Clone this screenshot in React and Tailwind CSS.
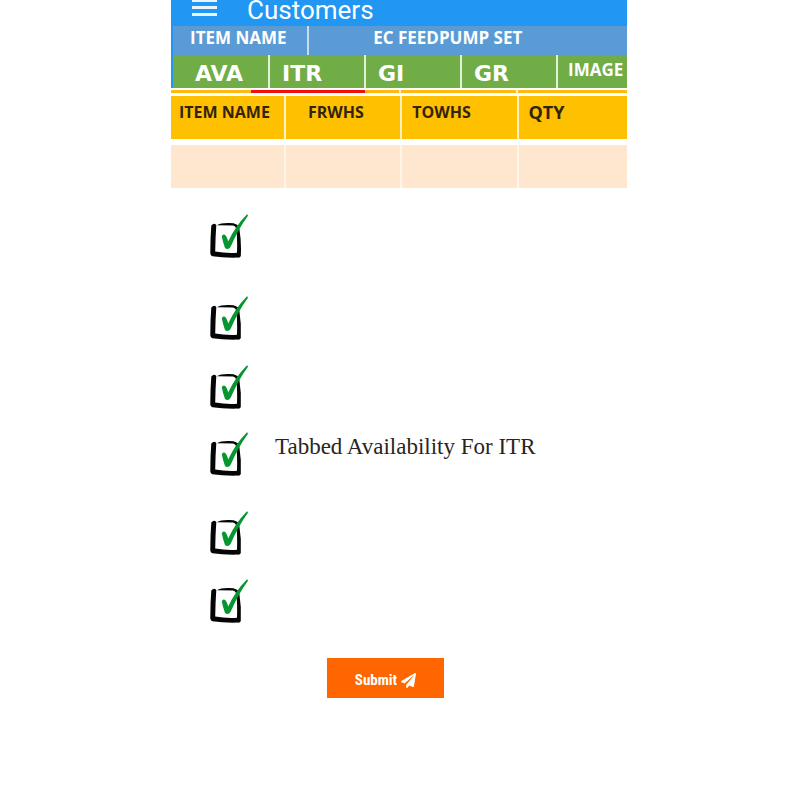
import { useState } from "react";

const tabs = [
  { name: "AVA", style: "pl-[22px] pt-1 text-[22px] font-['DejaVu_Sans',sans-serif]" },
  { name: "ITR", style: "pl-3 pt-1 text-[22px] font-['DejaVu_Sans',sans-serif]" },
  { name: "GI", style: "pl-3 pt-1 text-[22px] font-['DejaVu_Sans',sans-serif]" },
  { name: "GR", style: "pl-3 pt-1 text-[22px] font-['DejaVu_Sans',sans-serif]" },
  { name: "IMAGE", style: "pl-2.5 pb-1 text-[17px] font-['Open_Sans',sans-serif]" },
];

const columns = [
  { name: "ITEM NAME", style: "w-[25%] pl-2 text-base" },
  { name: "FRWHS", style: "w-[25.5%] pl-[22px] text-base" },
  { name: "TOWHS", style: "w-[25.5%] pl-2.5 text-base" },
  { name: "QTY", style: "w-[24%] pl-2.5 text-lg" },
];

const options = [
  { id: "first", text: "", gap: "mt-[26px]" },
  { id: "second", text: "", gap: "mt-[38px]" },
  { id: "third", text: "", gap: "mt-[25px]" },
  { id: "itr", text: "Tabbed Availability For ITR", gap: "mt-[23px]" },
  { id: "fifth", text: "", gap: "mt-[35px]" },
  { id: "sixth", text: "", gap: "mt-6" },
];

function Option({ id, text, gap }) {
  return (
    <li className={gap}>
      <label htmlFor={id} className="relative flex h-11 items-start gap-[26px]">
        <input id={id} type="checkbox" defaultChecked aria-label={text || "Option " + id} className="peer absolute size-8 appearance-none" />
        <svg viewBox="0 0 39 44" className="h-11 w-[39px] shrink-0 peer-checked:[&_.tick]:visible" aria-hidden="true">
          <path d="M1.3 11.5Q4 8.500 6.300 11Q5.400 24 5.200 37.600Q16 39.500 27 38.800Q27.500 24 26.300 14.500Q25.500 12 23 11.500L7 11.300Q10 9 18 9Q28.800 8.600 29.300 14.500Q31.600 28 30.800 42Q30.300 44 27 43.600Q13 43.900 2.500 42.200Q0 41.500 .300 38Q.300 24 1.300 11.500Z" fill="#050505" />
          <path className="tick invisible" d="M11.800 22.500Q12.500 20 14.800 20.800Q16.500 21.500 18.200 27.500Q25 12.500 36.800 .500Q38.300 0 37.800 2Q28 15.500 20.800 32.500Q18.300 36.800 15 34Q13 28.500 11.800 22.500Z" fill="#05962f" />
        </svg>
        <span className="font-['Liberation_Serif',serif] text-[23px] leading-[30px] text-[#29251e]">{text}</span>
      </label>
    </li>
  );
}

export default function App() {
  const [active, setActive] = useState("ITR");
  return (
    <div className="min-h-screen bg-white pr-0.5">
      <main className="mx-auto w-full max-w-[456px]">
        <header className="flex h-[26px] items-start gap-[30px] bg-[#2196f3] pl-[21px] text-white">
          <button type="button" aria-label="Menu" className="h-4">
            <svg viewBox="0 0 25 16" className="h-4 w-[25px]" fill="#e9f5fe" aria-hidden="true">
              <path d="M0 0h25v2H0zM0 6h25v3H0zM0 13h25v3H0z" />
            </svg>
          </button>
          <h1 className="font-['Roboto',sans-serif] text-[26px] leading-5">Customers</h1>
        </header>

        <div className="border-l-2 border-[#2196f3]">
          <dl className="flex h-[29px] bg-[#5b9bd5] font-['Open_Sans',sans-serif] text-[17px] font-bold leading-6 text-white">
            <dt className="w-[30%] border-r-2 border-[#c5dcf1] pl-[17px]">ITEM NAME</dt>
            <dd className="pl-16">EC FEEDPUMP SET</dd>
          </dl>
          <nav className="grid h-[33px] grid-cols-[97fr_96fr_96fr_96fr_69fr] bg-[#70ad47]">
            {tabs.map(({ name, style }) => (
              <button
                key={name}
                type="button"
                aria-pressed={active === name}
                onClick={() => setActive(name)}
                className={"border-r-2 border-[#e2efd9] text-left font-bold leading-6 text-white last:border-r-0 " + style}
              >
                {name}
              </button>
            ))}
          </nav>
        </div>

        <div className="mt-0.5 mb-[3px] flex h-[3px] bg-[#ffb90f]">
          <span className="w-[17.5%]" />
          <span className="w-[25%] bg-[#f40d0d]" />
          <span className="w-[8%] border-r-2 border-[#fff2cc]" />
          <span className="w-[25.5%] border-r-2 border-[#fff2cc]" />
        </div>

        <table className="w-full table-fixed border-collapse font-['Open_Sans',sans-serif] text-[#33230e]">
          <thead>
            <tr className="h-[46px] bg-[#ffc000]">
              {columns.map(({ name, style }) => (
                <th key={name} scope="col" className={"border-r-2 border-[#fff0c0] py-1 text-left align-top font-bold leading-6 last:border-r-0 " + style}>
                  {name}
                </th>
              ))}
            </tr>
          </thead>
          <tbody>
            <tr className="h-[46px] border-t-[6px] border-white bg-[#ffe7cf]">
              {columns.map(({ name }) => (
                <td key={name} className="border-r-2 border-r-[#fff6eb] last:border-r-0" />
              ))}
            </tr>
          </tbody>
        </table>

        <form onSubmit={(event) => event.preventDefault()}>
          <ul className="pl-[39px]">
            {options.map((option) => (
              <Option key={option.id} {...option} />
            ))}
          </ul>
          <button
            type="submit"
            className="mt-[35px] ml-[156px] flex h-10 w-[117px] items-center justify-center gap-1 bg-[#ff6600] pt-1 font-['Roboto_Condensed','Liberation_Sans_Narrow',Roboto,sans-serif] text-[15px] font-bold text-white"
          >
            Submit
            <svg viewBox="0 0 512 512" className="size-[15px]" fill="currentColor" aria-hidden="true">
              <path d="M476 3.2 12.5 270.6c-18.100 10.400-15.800 35.600 2.200 43.200L121 358.400l287.300-253.200c5.500-4.900 13.300 2.600 8.600 8.300L176 407v80.500c0 23.600 28.500 32.900 42.500 15.800L282 426l124.600 52.200c14.200 6 30.400-2.900 33-18.200l72-432C515 7.800 493.300-6.800 476 3.200z" />
            </svg>
          </button>
        </form>
      </main>
    </div>
  );
}
